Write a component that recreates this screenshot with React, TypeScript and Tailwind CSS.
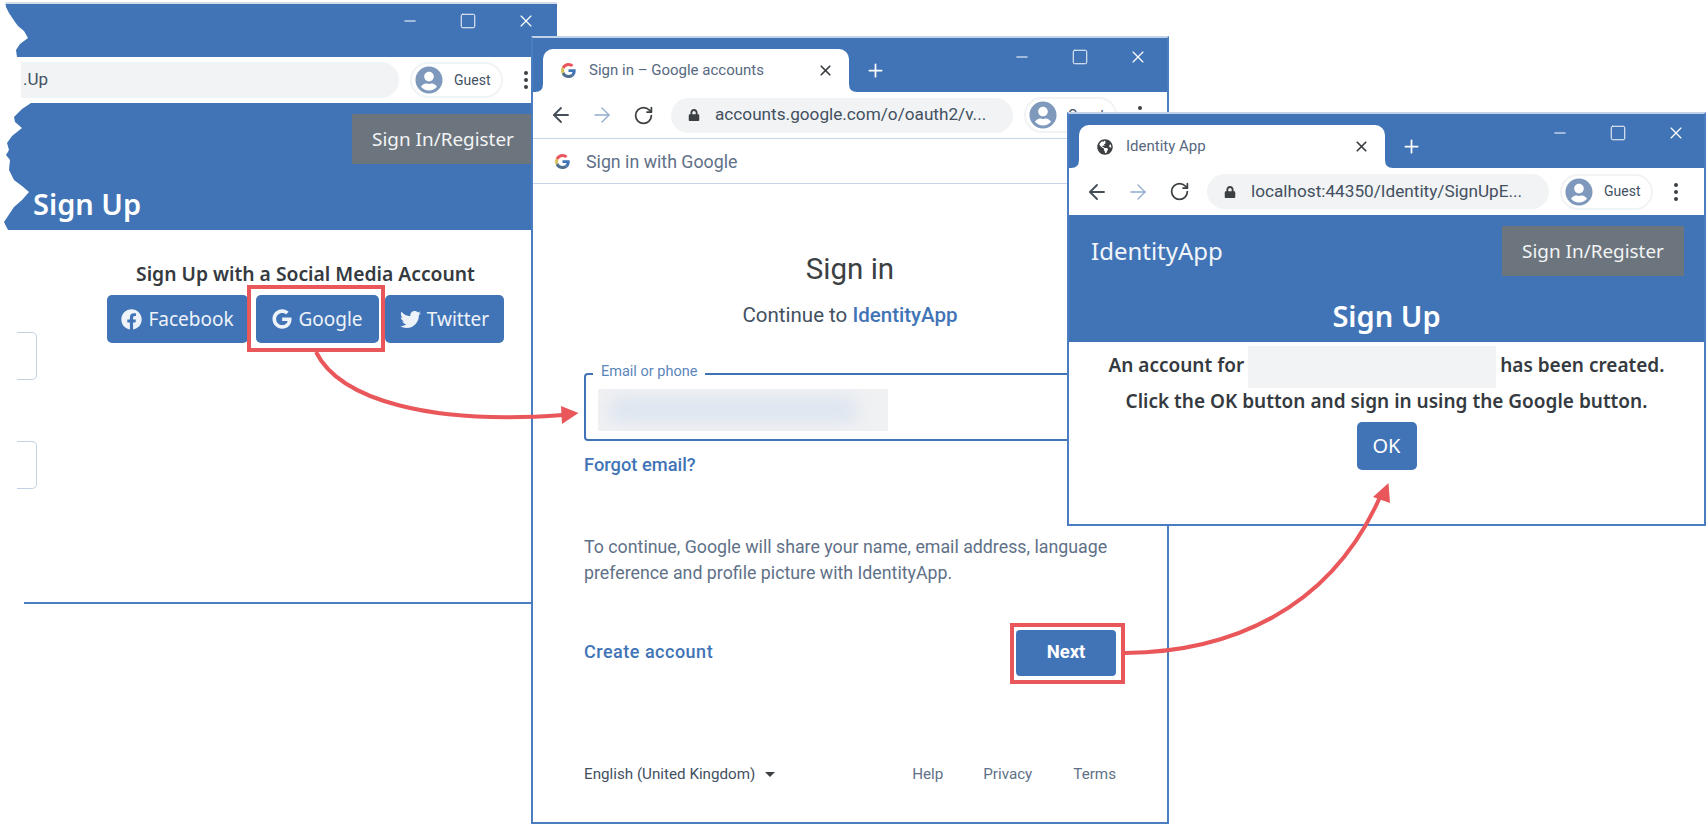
import React from "react";
import { ArrowLeft, ArrowRight, RotateCw, Plus, X, Minus, Square } from "lucide-react";
import { FaFacebook, FaGoogle, FaTwitter, FaGlobeAmericas, FaLock, FaUserCircle } from "react-icons/fa";

function GoogleG({ size = 16 }: { size?: number }) {
  return (
    <svg width={size} height={size} viewBox="0 0 48 48">
      <path fill="#e9555a" d="M24 9.500c3.500 0 6.700 1.200 9.200 3.600l6.900-6.900C35.900 2.400 30.500 0 24 0 14.600 0 6.500 5.400 2.600 13.200l8 6.200C12.500 13.700 17.800 9.500 24 9.500z" />
      <path fill="#4174b6" d="M47 24.500c0-1.600-.2-3.100-.4-4.500H24v9h13c-.6 3-2.300 5.500-4.800 7.200l7.700 6C44.400 37.900 47 31.800 47 24.500z" />
      <path fill="#d9c15a" d="M10.600 28.600c-.5-1.400-.8-3-.8-4.600s.3-3.200.8-4.600l-8-6.200C.9 16.500 0 20.100 0 24s.9 7.500 2.600 10.800l8-6.200z" />
      <path fill="#4f6f8f" d="M24 48c6.500 0 11.900-2.100 15.900-5.800l-7.700-6c-2.200 1.400-4.900 2.300-8.200 2.300-6.200 0-11.500-4.200-13.400-9.900l-8 6.200C6.500 42.600 14.600 48 24 48z" />
    </svg>
  );
}

function WinControls({ cls }: { cls: string }) {
  return (
    <div className={`ml-auto flex items-center gap-[40px] self-start text-white ${cls}`}>
      <Minus size={18} strokeWidth={1.4} />
      <Square size={18} strokeWidth={1.3} />
      <X size={18} strokeWidth={1.5} className="scale-110" />
    </div>
  );
}

function Flare({ side }: { side: "l" | "r" }) {
  return (
    <svg
      className={`absolute bottom-0 ${side === "l" ? "-left-[8px]" : "-right-[8px]"}`}
      width="8"
      height="8"
      viewBox="0 0 8 8"
    >
      <path fill="#ffffff" d={side === "l" ? "M8 0 V8 H0 Q8 8 8 0z" : "M0 0 V8 H8 Q0 8 0 0z"} />
    </svg>
  );
}

function Tab({ icon, title }: { icon: React.ReactNode; title: string }) {
  return (
    <div className="relative ml-[10px] flex h-[43px] w-[306px] items-center self-end rounded-t-[10px] bg-white pl-[18px] pr-[15px]">
      <Flare side="l" />
      <Flare side="r" />
      {icon}
      <span className="ml-[13px] text-[15px] text-[#56687f]">{title}</span>
      <X size={17} strokeWidth={2.4} className="ml-auto text-[#3c4043]" />
    </div>
  );
}

function GuestChip() {
  return (
    <div className="ml-[11px] flex h-[36px] w-[93px] shrink-0 items-center rounded-full border-2 border-[#f1f3f4] pl-[3px]">
      <FaUserCircle size={28} className="text-[#7e99bb]" />
      <span className="ml-[11px] text-[14px] text-[#43505f]">Guest</span>
    </div>
  );
}

function Dots() {
  return (
    <div className="ml-[21px] flex flex-col gap-[3px]">
      <span className="h-[4px] w-[4px] rounded-full bg-[#3c4043]" />
      <span className="h-[4px] w-[4px] rounded-full bg-[#3c4043]" />
      <span className="h-[4px] w-[4px] rounded-full bg-[#3c4043]" />
    </div>
  );
}

function Toolbar({ url, h }: { url: React.ReactNode; h: string }) {
  return (
    <div className={`flex shrink-0 items-center pl-[16px] ${h}`}>
      <ArrowLeft size={24} strokeWidth={1.8} className="text-[#464e58]" />
      <ArrowRight size={24} strokeWidth={1.3} className="ml-[17px] text-[#8fabcd]" />
      <RotateCw size={21} strokeWidth={2} className="ml-[19px] text-[#3c4043]" />
      <div className="ml-[17px] flex h-[35px] w-[342px] shrink-0 items-center rounded-full bg-[#f1f3f4] pl-[17px]">
        <FaLock size={12} className="text-[#3c4043]" />
        <span className="ml-[15px] whitespace-nowrap text-[17.2px] text-[#43505f]">{url}</span>
      </div>
      <GuestChip />
      <Dots />
    </div>
  );
}

function BlueBtn({ icon, label, w }: { icon: React.ReactNode; label: string; w: string }) {
  return (
    <div className={`flex h-[48px] items-center justify-center gap-[6px] rounded-[5px] bg-[#4174b6] text-[19px] text-[#eef3f9] ${w}`}>
      {icon}
      <span>{label}</span>
    </div>
  );
}

const seg = "font-['Noto_Sans',sans-serif]";
const rob = "font-['Roboto',sans-serif]";

export default function App() {
  return (
    <div className={`relative h-[825px] w-full overflow-hidden bg-white ${rob}`}>
      {/* Back window */}
      <div className="absolute left-0 top-[2px] flex h-[602px] w-[557px] flex-col border-t-2 border-t-[#d3dce8]">
        <div className="flex h-[53px] shrink-0 bg-[#4174b6]">
          <WinControls cls="pr-[22px] pt-[8px]" />
        </div>
        <div className="flex h-[46px] shrink-0 items-center">
          <div className="flex h-[36px] w-[399px] shrink-0 items-center rounded-r-full bg-[#f1f3f4] pl-[23px] text-[17px] text-[#43505f]">
            .Up
          </div>
          <GuestChip />
          <Dots />
        </div>
        <div className={`h-[127px] shrink-0 bg-[#4174b6] pt-[11px] ${seg}`}>
          <div className="ml-[352px] flex h-[50px] w-[182px] items-center justify-center bg-[#6c757d] text-[18.9px] text-[#f2f4f6]">
            Sign In/Register
          </div>
          <div className="ml-[33px] mt-[22px] text-[29px] font-semibold leading-[36px] text-white">Sign Up</div>
        </div>
        <div className={`flex ${seg}`}>
          <div className="flex w-[37px] shrink-0 flex-col gap-[61px] pl-[17px] pt-[102px]">
            <div className="h-[48px] rounded-r-[5px] border border-l-0 border-[#c3d3e6]" />
            <div className="h-[48px] rounded-r-[5px] border border-l-0 border-[#c3d3e6]" />
          </div>
          <div className="ml-[70px] flex w-[397px] flex-col items-center pt-[32px]">
            <div className="whitespace-nowrap text-[19.3px] font-semibold leading-[24px] text-[#343a40]">
              Sign Up with a Social Media Account
            </div>
            <div className="mt-[9px] flex w-full">
              <BlueBtn w="w-[141px]" label="Facebook" icon={<FaFacebook size={21} />} />
              <BlueBtn w="ml-[8px] w-[123px]" label="Google" icon={<FaGoogle size={20} />} />
              <BlueBtn w="ml-[6px] w-[119px]" label="Twitter" icon={<FaTwitter size={21} />} />
            </div>
          </div>
        </div>
        <div className="ml-[24px] mt-auto h-[2px] shrink-0 bg-[#4a7ec0]" />
      </div>
      {/* torn edge of the back window */}
      <svg className="absolute left-0 top-0" width="40" height="240" viewBox="0 0 40 240">
        <path
          fill="#ffffff"
          d="M0 0 H5 L6 7 L9 13 L15 22 L18 26 L24 31 L28 38 L20 44 L16 50 L17 57 L21 60 V97 L28 101 L31 103 L22 109 L14 117 L15 122 L22 128 L12 136 L7 143 L9 150 L6 155 L10 160 L9 170 L14 180 L22 186 L29 192 L22 200 L14 207 L8 216 L4 222 L9 232 H0 Z"
        />
      </svg>

      {/* Google window */}
      <div className="absolute left-[531px] top-[36px] flex h-[788px] w-[638px] flex-col border-x-2 border-b-2 border-t-2 border-x-[#4a7ec0] border-b-[#4a7ec0] border-t-[#c3d2e6] bg-white">
        <div className="flex h-[54px] shrink-0 bg-[#4174b6]">
          <Tab icon={<GoogleG size={15} />} title="Sign in – Google accounts" />
          <Plus size={21} strokeWidth={2} className="ml-[16px] mt-[22px] text-white" />
          <WinControls cls="pr-[20px] pt-[10px]" />
        </div>
        <Toolbar h="h-[46px]" url="accounts.google.com/o/oauth2/v..." />
        <div className="flex h-[46px] shrink-0 items-center border-y border-[#c5d4e7] pl-[22px]">
          <GoogleG size={15} />
          <span className="ml-[16px] mt-[2px] text-[17.8px] text-[#5f7188]">Sign in with Google</span>
        </div>
        <div className="flex flex-col px-[51px]">
          <div className="mt-[69px] text-center text-[29.5px] leading-[32px] text-[#3c4043]">Sign in</div>
          <div className="mt-[18px] text-center text-[20.5px] leading-[24px] text-[#43505f]">
            Continue to <span className="font-medium text-[#4174b6]">IdentityApp</span>
          </div>
          <div className="relative mt-[46px] h-[68px] rounded-[4px] border-2 border-[#4174b6]">
            <span className="absolute -top-[13px] left-[7px] bg-white px-[8px] text-[14.5px] leading-[20px] text-[#5b86bb]">
              Email or phone
            </span>
            <div className="absolute left-[12px] top-[14px] h-[42px] w-[290px] overflow-hidden bg-[#f0f1f3]">
              <div className="ml-[10px] mt-[8px] h-[26px] w-[250px] rounded-full bg-[#dde5ef] blur-sm" />
            </div>
          </div>
          <div className="mt-[14px] text-[18.3px] font-medium leading-[20px] text-[#4174b6]">Forgot email?</div>
          <div className="mt-[59px] w-[540px] text-[17.8px] leading-[26px] text-[#5f7188]">
            To continue, Google will share your name, email address, language preference and profile picture with
            IdentityApp.
          </div>
          <div className="mt-[44px] flex items-center justify-between">
            <span className="mb-[4px] text-[18px] font-medium tracking-[0.5px] text-[#4174b6]">Create account</span>
            <div className="flex h-[46px] w-[100px] items-center justify-center rounded-[4px] bg-[#4174b6] text-[18.5px] font-bold text-white">
              Next
            </div>
          </div>
          <div className="mt-[88px] flex items-center text-[15.2px] leading-[20px] text-[#5f7188]">
            <span className="text-[#43505f]">English (United Kingdom)</span>
            <span className="ml-[10px] h-0 w-0 border-x-[5px] border-t-[5px] border-x-transparent border-t-[#3c4043]" />
            <span className="ml-auto">Help</span>
            <span className="ml-[40px]">Privacy</span>
            <span className="ml-[41px]">Terms</span>
          </div>
        </div>
      </div>

      {/* Identity App window */}
      <div className="absolute left-[1067px] top-[112px] h-[414px] w-[639px] border-x-2 border-b-2 border-t-2 border-x-[#4a7ec0] border-b-[#4a7ec0] border-t-[#c3d2e6] bg-white">
        <div className="flex h-[54px] bg-[#4174b6]">
          <Tab icon={<FaGlobeAmericas size={16} className="text-[#3c4043]" />} title="Identity App" />
          <Plus size={21} strokeWidth={2} className="ml-[16px] mt-[22px] text-white" />
          <WinControls cls="pr-[19px] pt-[10px]" />
        </div>
        <Toolbar h="h-[47px]" url="localhost:44350/Identity/SignUpE..." />
        <div className={seg}>
          <div className="h-[127px] bg-[#4174b6] pt-[11px]">
            <div className="flex items-center justify-between pl-[22px] pr-[20px]">
              <span className="text-[24px] text-[#f2f5f9]">IdentityApp</span>
              <div className="flex h-[50px] w-[182px] items-center justify-center bg-[#6c757d] text-[18.9px] text-[#f2f4f6]">
                Sign In/Register
              </div>
            </div>
            <div className="mt-[22px] text-center text-[29px] font-semibold leading-[36px] text-white">Sign Up</div>
          </div>
          <div className="flex flex-col items-center text-[19px] font-semibold text-[#343a40]">
            <div className="mt-[4px] flex h-[42px] items-center whitespace-nowrap">
              <span className="mb-[3px]">An account for</span>
              <span className="mx-[4px] h-[42px] w-[248px] bg-[#f2f3f5]" />
              <span className="mb-[3px]">has been created.</span>
            </div>
            <div className="mt-[1px] whitespace-nowrap leading-[24px]">Click the OK button and sign in using the Google button.</div>
            <div className="mt-[9px] flex h-[48px] w-[60px] items-center justify-center rounded-[5px] bg-[#4174b6] text-[20px] font-normal text-white">
              OK
            </div>
          </div>
        </div>
      </div>

      {/* Annotations */}
      <div className="absolute left-[247px] top-[285px] h-[67px] w-[138px] border-[4px] border-[#e9575b]" />
      <div className="absolute left-[1010px] top-[623px] h-[61px] w-[115px] border-[4px] border-[#e9575b]" />
      <svg className="absolute left-0 top-0" width="1708" height="825" viewBox="0 0 1708 825">
        <path d="M316 352 C340 400 430 425 563 415" fill="none" stroke="#e9575b" strokeWidth="4" />
        <polygon points="561,406 578.500,413 562,424" fill="#e9575b" />
        <path d="M1125 653 C1230 652 1330 610 1380 497" fill="none" stroke="#e9575b" strokeWidth="4" />
        <polygon points="1388.500,483 1373,497 1390,503" fill="#e9575b" />
      </svg>
    </div>
  );
}
